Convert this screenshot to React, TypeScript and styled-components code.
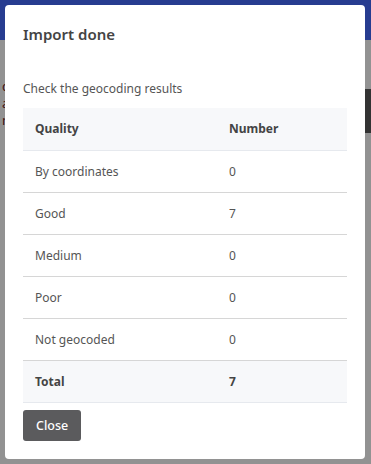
import styled, { createGlobalStyle } from 'styled-components';

const GlobalStyle = createGlobalStyle`
  html, body {
    margin: 0;
    padding: 0;
    height: 100%;
  }
  body {
    font-family: "Noto Sans", "Open Sans", sans-serif;
    background: #ffffff;
    overflow: hidden;
  }
`;

const Page = styled.div`
  width: 371px;
  height: 464px;
  display: flex;
  flex-direction: column;
  background: #f4f4f4;
`;

const Header = styled.header`
  height: 40px;
  background: #4264f0;
  flex-shrink: 0;
`;

const PageBody = styled.div`
  flex: 1;
  display: flex;
  flex-direction: column;
  padding: 38px 0 0 2px;
  color: #6b1a1a;
  font-size: 13px;
  line-height: 17px;
`;

const SideBlock = styled.div`
  align-self: flex-end;
  width: 6px;
  height: 44px;
  margin-top: -40px;
  background: #555;
`;

const Backdrop = styled.div`
  position: fixed;
  inset: 0;
  background: rgba(0, 0, 0, 0.4);
`;

const Modal = styled.div`
  position: fixed;
  top: 5px;
  left: 5px;
  width: 360px;
  height: 454px;
  background: #ffffff;
  border-radius: 4px;
  box-sizing: border-box;
  padding: 0 18px;
  display: flex;
  flex-direction: column;
  color: #555;
`;

const Title = styled.h2`
  margin: 0;
  padding: 20px 0 0;
  font-size: 15px;
  line-height: 19px;
  font-weight: 600;
  color: #444;
`;

const Intro = styled.p`
  margin: 36px 0 11px;
  font-size: 12px;
  line-height: 17px;
  color: #555;
`;

const Table = styled.table`
  width: 100%;
  border-collapse: collapse;
  font-size: 12px;
`;

const Row = styled.tr<{ $shaded?: boolean }>`
  height: 42px;
  background: ${({ $shaded }) => ($shaded ? '#f7f8fa' : '#ffffff')};
  border-bottom: 1px solid ${({ $shaded }) => ($shaded ? '#e6e9ee' : '#d6d6d6')};
`;

const Cell = styled.td<{ $bold?: boolean; $wide?: boolean }>`
  padding: 0 12px;
  width: ${({ $wide }) => ($wide ? '170px' : 'auto')};
  font-weight: ${({ $bold }) => ($bold ? 700 : 400)};
  color: ${({ $bold }) => ($bold ? '#444' : '#555')};
  text-align: left;
  vertical-align: middle;
`;

const HeadCell = styled.th<{ $wide?: boolean }>`
  padding: 0 12px;
  width: ${({ $wide }) => ($wide ? '170px' : 'auto')};
  font-weight: 700;
  color: #444;
  text-align: left;
`;

const Footer = styled.div`
  padding-top: 7px;
`;

const CloseButton = styled.button`
  height: 31px;
  padding: 0 13px;
  border: none;
  border-radius: 3px;
  background: #5b5b5d;
  color: #ffffff;
  font-family: "Noto Sans", "Open Sans", sans-serif;
  font-size: 12.5px;
  font-weight: 500;
  cursor: pointer;
`;

const rows = [
  { label: 'By coordinates', value: 0 },
  { label: 'Good', value: 7 },
  { label: 'Medium', value: 0 },
  { label: 'Poor', value: 0 },
  { label: 'Not geocoded', value: 0 },
];

export default function App() {
  const total = rows.reduce((sum, r) => sum + r.value, 0);

  return (
    <>
      <GlobalStyle />
      <Page>
        <Header />
        <PageBody>
          <span>co</span>
          <span>ar</span>
          <span>m</span>
          <SideBlock />
        </PageBody>
      </Page>
      <Backdrop />
      <Modal>
        <Title>Import done</Title>
        <Intro>Check the geocoding results</Intro>
        <Table>
          <thead>
            <Row $shaded>
              <HeadCell $wide>Quality</HeadCell>
              <HeadCell>Number</HeadCell>
            </Row>
          </thead>
          <tbody>
            {rows.map((r) => (
              <Row key={r.label}>
                <Cell $wide>{r.label}</Cell>
                <Cell>{r.value}</Cell>
              </Row>
            ))}
            <Row $shaded>
              <Cell $wide $bold>Total</Cell>
              <Cell $bold>{total}</Cell>
            </Row>
          </tbody>
        </Table>
        <Footer>
          <CloseButton>Close</CloseButton>
        </Footer>
      </Modal>
    </>
  );
}
